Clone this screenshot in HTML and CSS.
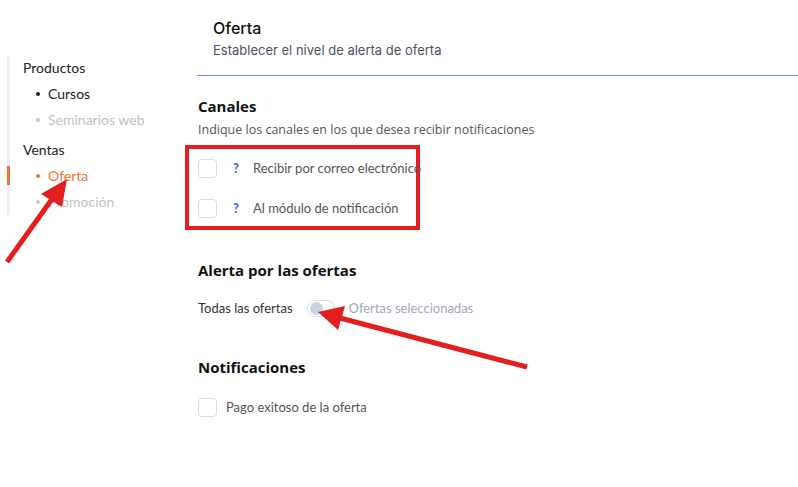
FILE: index.html
```html
<!DOCTYPE html>
<html lang="es">
<head>
    <meta charset="UTF-8">
    <meta name="viewport" content="width=device-width, initial-scale=1.0">
    <title>Oferta</title>
    <link rel="stylesheet" href="styles.css">
</head>
<body>
    <aside class="sidebar">
        <ul class="nav">
            <li class="nav-group">Productos</li>
            <li class="nav-item"><span class="dot"></span>Cursos</li>
            <li class="nav-item muted"><span class="dot"></span>Seminarios web</li>
            <li class="nav-group spaced">Ventas</li>
            <li class="nav-item active"><span class="dot"></span>Oferta</li>
            <li class="nav-item muted"><span class="dot"></span>Promoción</li>
        </ul>
    </aside>

    <main class="content">
        <header class="page-head">
            <h1>Oferta</h1>
            <p>Establecer el nivel de alerta de oferta</p>
        </header>

        <section class="section">
            <h2 class="canales">Canales</h2>
            <p class="hint">Indique los canales en los que desea recibir notificaciones</p>
            <div class="highlight">
                <label class="option">
                    <span class="check"></span>
                    <span class="help">?</span>
                    <span>Recibir por correo electrónico</span>
                </label>
                <label class="option">
                    <span class="check"></span>
                    <span class="help">?</span>
                    <span>Al módulo de notificación</span>
                </label>
            </div>
        </section>

        <section class="section">
            <h2 class="alerta">Alerta por las ofertas</h2>
            <div class="switch-row">
                <span>Todas las ofertas</span>
                <span class="switch"><span class="knob"></span></span>
                <span class="switch-off">Ofertas seleccionadas</span>
            </div>
        </section>

        <section class="section">
            <h2 class="notif">Notificaciones</h2>
            <label class="option single">
                <span class="check"></span>
                <span>Pago exitoso de la oferta</span>
            </label>
        </section>
    </main>

    <!-- annotation arrows -->
    <svg class="arrows" width="798" height="487" viewBox="0 0 798 487">
        <line x1="7" y1="262" x2="52" y2="199" stroke="#e41e1e" stroke-width="5"/>
        <polygon points="67,179 41,194 62,207" fill="#e41e1e"/>
        <line x1="527" y1="367" x2="340" y2="318" stroke="#e41e1e" stroke-width="5"/>
        <polygon points="318,312 345,306 338,330" fill="#e41e1e"/>
    </svg>
</body>
</html>
```

FILE: styles.css
```css
body {
    margin: 0;
    font-family: Lato, "Open Sans", sans-serif;
    color: #333;
    background: #fff;
    display: flex;
    width: 798px;
    height: 487px;
    overflow: hidden;
    position: relative;
}
.sidebar {
    width: 190px;
    padding: 55px 0 0 7px;
    flex-shrink: 0;
}
.nav {
    list-style: none;
    margin: 0;
    padding: 0 0 0 13px;
    border-left: 3px solid #efefef;
}
.nav li {
    line-height: 26px;
    font-size: 14px;
    color: #222;
    position: relative;
}
.nav-group.spaced {
    margin-top: 4px;
}
.nav-item {
    padding-left: 13px;
    display: flex;
    align-items: center;
}
.dot {
    width: 4px;
    height: 4px;
    border-radius: 50%;
    background: #222;
    margin-right: 8px;
}
.nav-item.muted {
    color: #c2c2c2;
}
.nav-item.muted .dot {
    background: #c8c8c8;
}
.nav-item.active {
    color: #f47235;
}
.nav-item.active .dot {
    background: #f47235;
}
.nav-item.active::before {
    content: "";
    position: absolute;
    left: -16px;
    top: 3px;
    width: 3px;
    height: 19px;
    background: #f47235;
}
.content {
    flex: 1;
}
.page-head {
    padding: 18px 16px 15px;
    border-bottom: 1px solid #6b8ef2;
}
.page-head h1 {
    margin: 0;
    font-family: Inter, sans-serif;
    font-size: 16px;
    font-weight: 500;
    line-height: 20px;
    color: #111;
}
.page-head p {
    margin: 2px 0 0;
    font-family: Inter, sans-serif;
    font-size: 13px;
    line-height: 20px;
    color: #4b5262;
}
.section {
    padding-left: 1px;
}
.section h2 {
    margin: 0;
    font-family: "Open Sans", sans-serif;
    font-size: 15px;
    font-weight: 700;
    line-height: 22px;
    color: #111;
}
.canales {
    padding-top: 19px;
}
.alerta {
    padding-top: 29px;
}
.notif {
    padding-top: 38px;
}
.hint {
    margin: 3px 0 0;
    font-family: "Open Sans", sans-serif;
    font-size: 12.5px;
    line-height: 20px;
    color: #555;
}
.highlight {
    margin: 5px 0 0 -13px;
    width: 235px;
    box-sizing: border-box;
    border: 4px solid #e41e1e;
    padding: 10px 0 8px 9px;
    display: flex;
    flex-direction: column;
    gap: 21px;
}
.option {
    display: flex;
    align-items: center;
    font-size: 13px;
    line-height: 19px;
    color: #555;
    white-space: nowrap;
}
.option.single {
    margin-top: 20px;
}
.check {
    flex-shrink: 0;
    width: 19px;
    height: 19px;
    box-sizing: border-box;
    border: 1px solid #dcdcdc;
    border-radius: 4px;
    margin-right: 9px;
}
.help {
    flex-shrink: 0;
    width: 16px;
    margin-left: 7px;
    margin-right: 4px;
    font-weight: 700;
    color: #3d63e8;
}
.switch-row {
    margin-top: 17px;
    display: flex;
    align-items: center;
    font-size: 13px;
    line-height: 20px;
    color: #333;
}
.switch {
    width: 28px;
    height: 17px;
    box-sizing: border-box;
    border: 1px solid #d8dee8;
    border-radius: 9px;
    margin: 0 14px 0 14px;
    display: flex;
    align-items: center;
    padding-left: 2px;
}
.knob {
    width: 13px;
    height: 13px;
    border-radius: 50%;
    background: #c9d2e2;
}
.switch-off {
    color: #a2aab8;
}
.arrows {
    position: absolute;
    left: 0;
    top: 0;
    pointer-events: none;
}
```
